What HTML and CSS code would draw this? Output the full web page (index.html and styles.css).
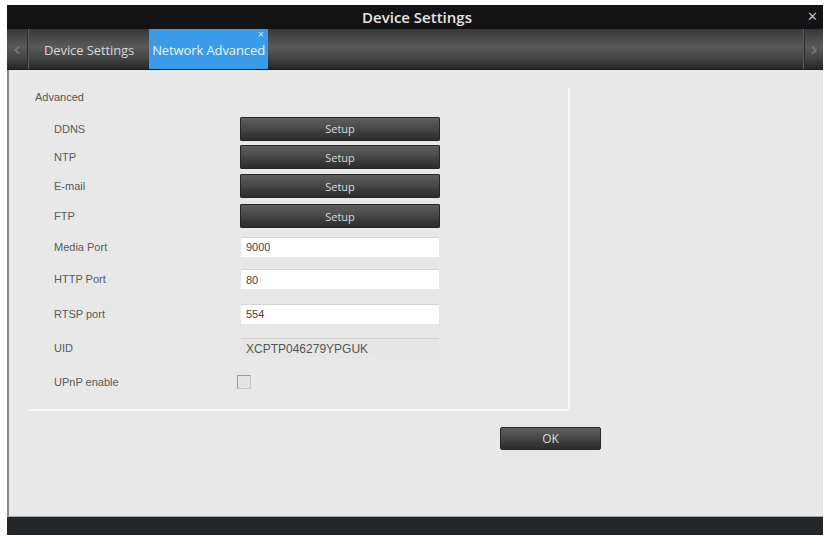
FILE: index.html
```html
<!DOCTYPE html>
<html lang="en">
<head>
  <meta charset="UTF-8" />
  <title>Device Settings</title>
  <link rel="stylesheet" href="styles.css">
</head>
<body>
  <div class="window">
    <div class="titlebar">
      <span class="title">Device Settings</span>
      <span class="close">&#x2715;</span>
    </div>

    <div class="tabbar">
      <div class="arrow arrow-left">&#x2039;</div>
      <div class="tab">Device Settings</div>
      <div class="tab active">Network Advanced<span class="tab-close">&#x2715;</span></div>
      <div class="tab-spacer"></div>
      <div class="arrow arrow-right">&#x203A;</div>
    </div>

    <div class="content">
      <div class="group">
        <div class="legend">Advanced</div>
        <div class="rows">
          <label>DDNS</label>
          <div class="ctl"><button class="btn">Setup</button></div>

          <label>NTP</label>
          <div class="ctl"><button class="btn">Setup</button></div>

          <label>E-mail</label>
          <div class="ctl"><button class="btn">Setup</button></div>

          <label>FTP</label>
          <div class="ctl"><button class="btn">Setup</button></div>

          <label>Media Port</label>
          <div class="ctl"><input type="text" value="9000" /></div>

          <label>HTTP Port</label>
          <div class="ctl"><input type="text" value="80" /></div>

          <label>RTSP port</label>
          <div class="ctl"><input type="text" value="554" /></div>

          <label>UID</label>
          <div class="ctl"><input type="text" class="readonly" value="XCPTP046279YPGUK" readonly /></div>

          <label>UPnP enable</label>
          <div class="ctl"><span class="check"></span></div>
        </div>
      </div>

      <div class="actions">
        <button class="btn btn-ok">OK</button>
      </div>
    </div>

    <div class="footer"></div>
  </div>
</body>
</html>
```

FILE: styles.css
```css
html, body {
  margin: 0;
  padding: 0;
  background: #ffffff;
}

body {
  font-family: "Liberation Sans", Arial, sans-serif;
  font-size: 11px;
  color: #555;
}

.window {
  margin: 5px 0 0 7px;
  width: 816px;
  height: 530px;
  display: flex;
  flex-direction: column;
}

/* title bar */
.titlebar {
  height: 24px;
  background: #131315;
  position: relative;
  display: flex;
  align-items: center;
  justify-content: center;
}

.title {
  font-family: "Open Sans", sans-serif;
  font-weight: 600;
  font-size: 15px;
  color: #e4e4e4;
  margin-left: 4px;
}

.close {
  position: absolute;
  right: 5px;
  top: 4px;
  font-size: 13px;
  color: #bdbdbd;
  font-family: "DejaVu Sans", sans-serif;
}

/* tabs */
.tabbar {
  height: 41px;
  display: flex;
  background: linear-gradient(#383838 0%, #4f4f4f 30%, #595959 45%, #424242 75%, #252525 100%);
  border-bottom: 1px solid #1a1a1a;
  box-sizing: border-box;
}

.arrow {
  width: 20px;
  display: flex;
  align-items: center;
  justify-content: center;
  font-family: "DejaVu Sans", sans-serif;
  font-size: 20px;
  color: #7a7a7a;
}

.arrow-left {
  border-right: 1px solid #2a2a2a;
  box-shadow: 1px 0 0 #5c5c5c;
}

.arrow-right {
  width: 18px;
  border-left: 1px solid #2a2a2a;
  box-shadow: -1px 0 0 #5c5c5c;
}

.tab {
  font-family: "Open Sans", sans-serif;
  font-size: 13px;
  color: #d6d6d6;
  display: flex;
  align-items: center;
  padding: 2px 15px 0 16px;
  letter-spacing: -0.1px;
}

.tab.active {
  background: #3a9bea;
  color: #eaf4ff;
  padding: 2px 2px 0 3px;
  width: 119px;
  box-sizing: border-box;
  position: relative;
  white-space: nowrap;
}

.tab-close {
  position: absolute;
  right: 4px;
  top: 1px;
  font-size: 8px;
  color: #cfe6fb;
  font-family: "DejaVu Sans", sans-serif;
}

.tab-spacer {
  flex: 1;
}

/* content */
.content {
  flex: 1;
  background: #e8e8e8;
  border-left: 2px solid #8a8a8a;
  padding: 18px 0 0 19px;
  box-sizing: border-box;
}

.group {
  width: 542px;
  height: 323px;
  box-sizing: border-box;
  border-right: 2px solid #f6f6f6;
  border-bottom: 2px solid #f6f6f6;
  padding: 2px 0 0 7px;
}

.legend {
  line-height: 14px;
  color: #555;
}

.rows {
  margin: 10px 0 0 19px;
  display: grid;
  grid-template-columns: 186px 200px;
  grid-template-rows: 29px 28px 30px 30px 31px 34px 35px 34px 34px;
  align-items: center;
}

.rows label {
  color: #5a5a5a;
}

.ctl {
  display: flex;
  align-items: center;
}

.btn {
  width: 200px;
  height: 24px;
  border: 1px solid #262626;
  border-radius: 1px;
  background: linear-gradient(#5e5e5e 0%, #4a4a4a 45%, #3a3a3a 70%, #2c2c2c 100%);
  color: #dcdcdc;
  font-family: "Open Sans", sans-serif;
  font-size: 11px;
  padding: 0;
  cursor: pointer;
}

input {
  width: 198px;
  height: 20px;
  margin-left: 1px;
  box-sizing: border-box;
  border: none;
  border-top: 1px solid #d4d4d4;
  background: #ffffff;
  font-family: "Liberation Sans", Arial, sans-serif;
  font-size: 11px;
  color: #444;
  padding: 0 5px;
  outline: none;
}

input.readonly {
  background: #e6e6e6;
  border-top: 1px solid #cdcdcd;
  color: #555;
  font-size: 12px;
}

.check {
  width: 12px;
  height: 12px;
  margin-left: -3px;
  border: 1px solid #9a9a9a;
  border-bottom-color: #c8c8c8;
  border-right-color: #c8c8c8;
  background: #e4e4e4;
  display: block;
}

.actions {
  margin: 16px 0 0 472px;
}

.btn-ok {
  width: 101px;
  height: 23px;
  border-radius: 2px;
  font-size: 12px;
}

.footer {
  height: 18px;
  background: #23272a;
  border-top: 1px solid #a8a8a8;
}
```
